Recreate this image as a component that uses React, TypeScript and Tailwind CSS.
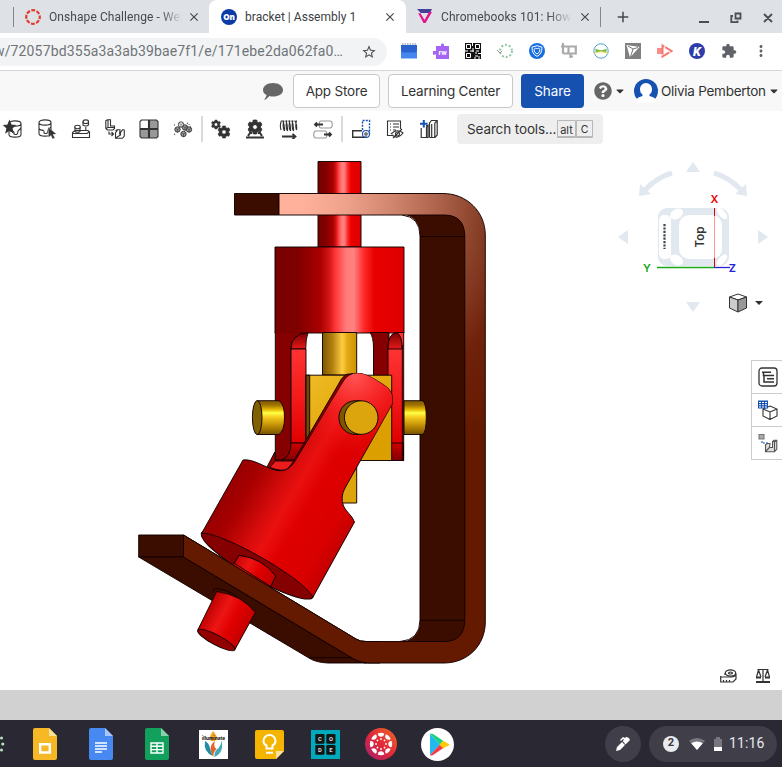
import type { ReactNode } from "react";
import { MdExtension, MdMoreVert, MdStarBorder, MdClose, MdAdd } from "react-icons/md";
import { FaQuestionCircle, FaCog, FaCaretDown } from "react-icons/fa";

const roboto = "font-[Roboto,sans-serif]";
const inter = "font-[Inter,sans-serif]";

function Slot({ children, w }: { children: ReactNode; w: string }) {
  return <div className={`flex h-full shrink-0 items-center justify-center ${w}`}>{children}</div>;
}

function TabStrip() {
  return (
    <div className={`flex h-[33px] bg-[#dee1e6] text-[12px] text-[#45494d] ${roboto}`}>
      <div className="flex w-[209px] items-center bg-[#dee1e6]">
        <div className="flex h-5 w-[14px] items-center overflow-hidden border-r border-[#84888c]">
          <MdClose className="-ml-[10px] size-[13px] shrink-0" />
        </div>
        <svg className="ml-[11px] size-4" viewBox="0 0 16 16">
          <circle cx="8" cy="8" r="6.8" fill="none" stroke="#e23b2e" strokeWidth="2.2" strokeDasharray="3.9 1.44" strokeDashoffset="1.9" />
        </svg>
        <div className="ml-2 w-[133px] overflow-hidden whitespace-nowrap tracking-[0.08px] [mask-image:linear-gradient(to_right,black_84%,transparent)]">Onshape Challenge - Web</div>
        <MdClose className="ml-[5px] size-[14px]" />
      </div>
      <div className="flex w-[197px] items-center rounded-t-lg bg-white">
        <svg className="ml-3 size-4" viewBox="0 0 16 16">
          <circle cx="8" cy="8" r="8" fill="#0b3ba5" />
          <text x="8" y="11" textAnchor="middle" fontFamily="Open Sans, sans-serif" fontWeight="800" fontSize="8" fill="#fff">On</text>
        </svg>
        <div className="ml-2 w-[138px] whitespace-nowrap tracking-[0.03px] text-[#3c4043]">bracket | Assembly 1</div>
        <MdClose className="size-[14px]" />
      </div>
      <div className="flex flex-1 items-center">
        <svg className="ml-[11px] size-[15px]" viewBox="0 0 15 15">
          <path d="M0 0H15L13 4H5.5L3.8 4.1Z" fill="#454095" />
          <path d="M3.5 4.2L7.5 11L12 3H15L8.5 14H6.5L1.2 4.2Z" fill="#e3138c" />
        </svg>
        <div className="ml-[9px] w-[131px] overflow-hidden whitespace-nowrap tracking-[0.1px] [mask-image:linear-gradient(to_right,black_82%,transparent)]">Chromebooks 101: How to</div>
        <MdClose className="ml-[6px] size-[14px]" />
        <div className="ml-[8px] h-5 w-px bg-[#84888c]" />
        <MdAdd className="ml-[13px] size-[18px]" />
        <svg className="ml-[67px] mt-[2px] h-3 w-[75px]" viewBox="0 0 75 12" fill="none" stroke="#4a4d51" strokeWidth="1.8">
          <path d="M0 10H10M36.5 1.5H41.5V6.5H36.5ZM34 4H32.3V10.2H38.5V8.4M65 2L73 10M73 2L65 10" />
        </svg>
      </div>
    </div>
  );
}

const extensions: ReactNode[] = [
  <svg viewBox="0 0 16 16" className="size-4"><path d="M0 2H16V15.5H0Z" fill="#4286ee" /><path d="M0 2H16V8L14 9.5H2L0 8Z" fill="#2a62cf" /><path d="M1 1H15" stroke="#b8bec6" strokeDasharray="1.5 1" strokeWidth="2" /></svg>,
  <svg viewBox="0 0 16 16" className="size-4"><path d="M4 3H8V1.5A1.7 1.7 0 0 1 11 1.5V3H16V16H3V11.5H2A2 2 0 0 1 0 8H3V3Z" fill="#a464f4" /><text x="9.7" y="12" textAnchor="middle" fontFamily="Roboto, sans-serif" fontWeight="700" fontSize="7.5" fill="#fff">rw</text></svg>,
  <svg viewBox="0 0 16 16" className="size-4"><path d="M0 0H16V16H0Z" fill="#111" /><path d="M1.5 1.5h4v4h-4zM10.5 1.5h4v4h-4zM1.5 10.5h4v4h-4zM7.5 0v3M8 5v4M0 8h3M5 8h4M11 8h3M10 10h2M13 10.5h3M10 13h3M9 15h2M14 13v3" fill="none" stroke="#fff" /></svg>,
  <svg viewBox="0 0 16 16" className="size-4"><circle cx="9" cy="8" r="6" fill="none" stroke="#8fc397" strokeWidth="2" strokeDasharray="1.8 2" /><path d="M0 7L3 10L5 8" fill="none" stroke="#999" /></svg>,
  <svg viewBox="0 0 16 16" className="size-4"><circle cx="8" cy="8" r="8" fill="#176ee0" /><path d="M8 2.7L13 4.2C13 9 11.5 11.7 8 13.4C4.5 11.7 3 9 3 4.2ZM8 5.8C4.2 3.6 4.1 9.1 8 11C11.9 9.1 11.8 3.6 8 5.8Z" fill="none" stroke="#fff" /></svg>,
  <svg viewBox="0 0 16 16" className="size-4" fill="none" stroke="#aaa" strokeWidth="2.2"><path d="M2 0V9.5Q2 10.5 3 10.5H7.5V3.5H14.8V10.5H9.5V15M0 3.5H7.5M9.5 13.5H12" /></svg>,
  <svg viewBox="0 0 16 16" className="size-4"><circle cx="8" cy="8" r="7.2" fill="#fff" stroke="#4f9fd0" /><path d="M2.5 5.5Q8 9 13.5 5.5V10Q8 7.5 2.5 10Z" fill="#77c043" /><path d="M1 10.5Q8 7 15 10.5" fill="none" stroke="#f1d65a" /></svg>,
  <svg viewBox="0 0 16 16" className="size-4"><path d="M0 0H16V16H0Z" fill="#808080" /><path d="M1.5 2L14.5 4L5 14.5Z" fill="#fff" /><path d="M3 3L8 6L5.5 14M8 6L13 4.5" fill="none" stroke="#555" strokeWidth=".8" /></svg>,
  <svg viewBox="0 0 16 16" className="size-4"><path d="M0 5H6V11H0Z" fill="#f98d8a" /><path d="M5.5 2.5V13.5L14.5 8Z" fill="#fff" stroke="#f87572" strokeWidth="2" strokeDasharray="9 1" /></svg>,
  <svg viewBox="0 0 16 16" className="size-4"><circle cx="8" cy="8" r="8" fill="#2d3caa" /><text x="8" y="12.5" textAnchor="middle" fontFamily="Roboto, sans-serif" fontStyle="italic" fontWeight="900" fontSize="12.5" fill="#fff">K</text></svg>,
  <MdExtension className="size-4 text-[#5f6368]" />,
  <MdMoreVert className="size-[18px] text-[#5f6368]" />,
];

function AddressBar() {
  return (
    <div className="flex h-[37px] items-center bg-white">
      <div className={`flex h-7 w-[387px] items-center justify-end rounded-r-full bg-[#f1f3f4] text-[14px] text-[#707478] ${roboto}`}>
        <span className="whitespace-nowrap tracking-[0.14px]">w/72057bd355a3a3ab39bae7f1/e/171ebe2da062fa0…</span>
        <MdStarBorder className="ml-[18px] mr-[10px] size-4 shrink-0 text-[#4c5054]" />
      </div>
      <div className="ml-[6px] flex h-full pb-px">
        {extensions.map((icon, i) => <Slot key={i} w="w-[32px]">{icon}</Slot>)}
      </div>
    </div>
  );
}

function DocumentHeader() {
  const button = "flex h-[34px] items-center justify-center rounded border border-[#c8c8c8] bg-white";
  return (
    <div className={`flex h-[41px] items-center border-t border-[#d4d6da] bg-[#f8f8f8] text-[13.5px] text-[#333] ${inter}`}>
      <svg className="ml-[263px] mr-[10px] h-[17px] w-5" viewBox="0 0 20 17"><path d="M10 0C15.5 0 20 2.8 20 7S15.5 13.5 10 13.5Q8 13.5 6.5 13Q4 16 1 17Q3.5 14 3.5 12Q0 10.4 0 7C0 2.8 4.5 0 10 0" fill="#666" /></svg>
      <div className={`w-[87px] tracking-[-0.2px] ${button}`}>App Store</div>
      <div className={`ml-2 w-[125px] tracking-[-0.24px] ${button}`}>Learning Center</div>
      <div className="ml-2 flex h-[34px] w-[63px] items-center justify-center rounded bg-[#1651b0] tracking-[-0.1px] text-white">Share</div>
      <FaQuestionCircle className="ml-[10px] size-[18px] text-[#666]" />
      <FaCaretDown className="ml-[2px] size-3" />
      <svg className="ml-[8px] size-6" viewBox="0 0 24 24">
        <circle cx="12" cy="12" r="12" fill="#1651b0" />
        <path d="M6 10A6 6 0 0 1 18 10Q18 14 15.5 15.5V17Q20 18 21.5 20V24H2.5V20Q4 18 8.5 17V15.5Q6 14 6 10" fill="#fff" />
      </svg>
      <span className="ml-[3px] w-[106px] whitespace-nowrap tracking-[-0.27px]">Olivia Pemberton</span>
      <FaCaretDown className="ml-[1px] size-3 shrink-0" />
    </div>
  );
}

function Line({ children }: { children: ReactNode }) {
  return <svg viewBox="0 0 20 20" className="size-5" fill="none" stroke="#333" strokeWidth="1.1">{children}</svg>;
}

const cyl = <path d="M4 4.5V15.5C4 19 16 19 16 15.5V4.5C16 1 4 1 4 4.5C4 8 16 8 16 4.5M4 10C4 14 10 10 9 15Q13 17 13 12L16 9" />;

function FeatureToolbar() {
  return (
    <div className="flex h-9 items-center bg-white">
      <div className="-ml-1 flex h-full">
        <Slot w="w-[34px]"><Line><g transform="translate(2 0)">{cyl}</g><path d="M6.5 2L8.2 6L12 6.5L9 9.2L10 13.5L6.5 11L3 13.5L4 9.2L1 6.5L4.8 6Z" fill="#333" /></Line></Slot>
        <Slot w="w-[34px]"><Line><g transform="translate(-2 -1)">{cyl}</g><path d="M11 8L19.5 15L16 15.5L18 19L15.5 20L14 16.5L11.5 18.5Z" fill="#333" stroke="#fff" strokeWidth=".4" /></Line></Slot>
        <Slot w="w-[34px]"><Line><path d="M1.5 13.5L4 11.5H17L18.5 13V18.5H1.5ZM1.5 14.5H16L18.5 12.5M4 8V12.5Q6.5 14 9 12.5V8M12 2.5V6Q14.5 8 17.5 6V2.5M14.8 8V12" /><ellipse cx="6.5" cy="8" rx="2.7" ry="1.8" fill="#fff" /><ellipse cx="14.8" cy="2.7" rx="2.7" ry="1.8" fill="#fff" /></Line></Slot>
        <Slot w="w-[34px]"><Line><path d="M.8 1.8L2.5.8H5.5V7H9.5V9.5L8 11H2.5L.8 9.5ZM3 1V8.5L.8 9.5M3 8.5H9M10.5 12L12 10.8M19.3 10.8V17L17.5 19.3H10.5V14L12.5 10.8H15L14.5 15.5M19.3 10.8H17.5L15.5 13.5V16L10.5 19M4 12.5V15H8M6.5 13L8.5 15L6.5 17" /></Line></Slot>
        <Slot w="w-[34px]"><Line><path d="M1 2.5L2.5 1H9.5V9.5H1Z" fill="#fff" /><path d="M10.5 1H17.5L19 2.5V9.5H10.5ZM1 10.5H9.5V19H2.5L1 17.5ZM10.5 10.5H19V17.5L17.5 19H10.5Z" fill="#999" /></Line></Slot>
        <Slot w="w-[34px]"><Line>
          {[[8, 5.5], [4.5, 10.5], [12, 8.5], [10.5, 15], [16, 10.5]].map(([x, y], i) => <g key={i}><circle cx={x} cy={y} r="2.7" fill={i ? "#999" : "#fff"} strokeWidth=".9" /><path d={`M${x - 2} ${y - 1}L${x} ${y}L${x + 2} ${y - 1}M${x} ${y}V${y + 3}`} strokeWidth=".6" /></g>)}
          <path d="M1 6H3M14 4L17 6M1 15L3 16M17 8H19" strokeDasharray="1 1" />
        </Line></Slot>
      </div>
      <div className="mx-px h-[26px] w-[2px] bg-[#dadada]" />
      <div className="flex h-full">
        <Slot w="w-[34px]"><Line><FaCog x="0" y="0.5" size={10} color="#333" stroke="#333" strokeWidth="10" /><FaCog x="6.5" y="6.5" size={13} color="#333" stroke="#333" strokeWidth="20" /></Line></Slot>
        <Slot w="w-[34px]"><Line><FaCog x="2.5" y="0.5" size={15} color="#333" stroke="#333" strokeWidth="30" /><path d="M1 18.5H19M3 17L5 14H7M17 17L15 14H13" strokeWidth="2" /></Line></Slot>
        <Slot w="w-[34px]"><Line><path d="M2.5 1.5Q.5 6 2 11M5 1.5Q3 8 5.5 12M8 1.5Q6 8 8.5 12M11 1.5Q9 8 11.5 12M14 1.5Q12 8 14.5 12M17.5 1.5Q16 8 17.5 11M3.5 1.5Q6 6 5.5 12M6.7 1.5Q9 6 8.5 12M9.7 1.5Q12 6 11.5 12M12.7 1.5Q15 6 14.5 12M15.7 1.5Q18.5 6 17.5 11" strokeWidth="1.1" /><path d="M3 17.5H16M13.5 14.8L16.5 17.5L13.5 20.2" strokeWidth="1.8" /></Line></Slot>
        <Slot w="w-[34px]"><Line><path d="M8 2H17C20 2 20 9 17 9H8C5.5 9 5.5 2 8 2ZM2 12H12C14.5 12 14.5 19 12 19H3C0 19 0 12 3 12" stroke="#999" /><path d="M10 5.5H2M4 3.5L2 5.5L4 7.5M11 15.5H18M16 13.5L18 15.5L16 17.5" strokeWidth="1.8" /></Line></Slot>
      </div>
      <div className="mx-px h-[26px] w-[2px] bg-[#dadada]" />
      <div className="flex h-full">
        <Slot w="w-[34px]"><Line><path d="M11 11.7H1.7V18.3H16" strokeWidth="1.4" /><path d="M11.5 11V1.5H18.5V15" stroke="#1651b0" strokeWidth="1.4" strokeDasharray="2 1.2" /><circle cx="15" cy="15" r="3.5" stroke="#1651b0" /><circle cx="15" cy="15" r="1.2" /></Line></Slot>
        <Slot w="w-[34px]"><Line><path d="M8 16.5H2.5V2H15.5V10M5 5H6M8 5H14M5 8H6M8 8H14M5 11H6M8 11H11M6 15Q12 9 18 14Q13 21 7 16M17 10L8 19" /><circle cx="12.5" cy="15" r="2" /></Line></Slot>
        <Slot w="w-[34px]"><Line><path d="M2.2 9V18.5H9V6.5L7.5 8V18M9 6.5H7M10.5 18.5V4L12.5 1.5H18.2V16L16 18.5H10.5M15.8 4V18M15.8 4L18 2M12.7 5V18" strokeWidth="1.2" /><path d="M4.8 1V8.5M1 4.7H8.6" stroke="#1651b0" strokeWidth="2" /></Line></Slot>
      </div>
      <div className={`ml-[11px] flex h-[30px] w-[146px] items-center rounded bg-[#eee] pl-[10px] text-[13.5px] text-[#333] ${inter}`}>
        <span className="w-[90px] whitespace-nowrap tracking-[-0.12px]">Search tools...</span>
        <span className="flex h-[18px] w-[19px] items-center justify-center rounded-[1px] border border-b-2 border-[#b8b8b8] pt-[3px] text-[11px]">alt</span>
        <span className="flex h-[18px] w-[17px] items-center justify-center rounded-[1px] border border-b-2 border-[#b8b8b8] pt-[3px] text-[10.5px]">C</span>
      </div>
    </div>
  );
}

type Stop = [number, string];
function Grad({ id, x1, y1, x2, y2, stops }: { id: string; x1: number; y1: number; x2: number; y2: number; stops: Stop[] }) {
  return (
    <linearGradient id={id} gradientUnits="userSpaceOnUse" x1={x1} y1={y1} x2={x2} y2={y2}>
      {stops.map(([o, c]) => <stop key={o} offset={o} stopColor={c} />)}
    </linearGradient>
  );
}

const forkOutline = "M243 460C253 458.5 264 467 275 470C286 473 292 467 298 456L342 384Q348 371.5 361 373.5Q368 374.5 384 385Q394.5 391 392.3 404L345 488Q340 497 343.5 506C346 512 352 515 354.5 522L313 597C300 575 217 530 201.5 533.5Z";

function Model() {
  const steel: Stop[] = [[0, "#780000"], [0.18, "#800000"], [0.35, "#aa0000"], [0.42, "#d31515"], [0.47, "#ff3838"], [0.55, "#ff7a7a"], [0.61, "#ff8282"], [0.69, "#ff2a2a"], [0.77, "#e80000"], [1, "#df0000"]];
  const brass: Stop[] = [[0, "#7a5600"], [0.15, "#a27500"], [0.27, "#e6b800"], [0.37, "#ffff45"], [0.5, "#f4c81c"], [0.8, "#ae7c00"], [1, "#6f4c00"]];
  return (
    <g stroke="#140000" strokeWidth="0.95" strokeLinejoin="round">
      <defs>
        <radialGradient id="frame" gradientUnits="userSpaceOnUse" cx="280" cy="200" r="300">
          <stop offset="0.08" stopColor="#ffb19b" /><stop offset="0.22" stopColor="#efa28b" /><stop offset="0.38" stopColor="#cf846d" />
          <stop offset="0.55" stopColor="#a85e46" /><stop offset="0.66" stopColor="#89412a" /><stop offset="0.8" stopColor="#70220c" /><stop offset="1" stopColor="#641a00" />
        </radialGradient>
        <Grad id="shaft" x1={318} y1={0} x2={361} y2={0} stops={steel} />
        <Grad id="yoke" x1={275} y1={0} x2={404} y2={0} stops={steel} />
        <Grad id="rod" x1={322} y1={0} x2={357} y2={0} stops={[[0, "#7a5600"], [0.3, "#b38110"], [0.58, "#ffcd42"], [0.72, "#e4aa12"], [1, "#c99200"]]} />
        <Grad id="pin" x1={0} y1={400} x2={0} y2={435} stops={brass} />
        <Grad id="block" x1={310} y1={375} x2={370} y2={440} stops={[[0, "#efba25"], [1, "#dba000"]]} />
        <Grad id="side" x1={0} y1={349} x2={0} y2={443} stops={[[0, "#ff3333"], [0.5, "#f31b1b"], [1, "#e00000"]]} />
        <Grad id="bend" x1={0} y1={333} x2={0} y2={349} stops={[[0, "#800000"], [1, "#e51919"]]} />
        <Grad id="foot" x1={0} y1={443} x2={0} y2={460} stops={[[0, "#d00000"], [1, "#850000"]]} />
        <Grad id="fork" x1={222} y1={496} x2={336} y2={562} stops={[[0, "#980000"], [0.15, "#a80000"], [0.37, "#d90c0c"], [0.46, "#ea1010"], [0.6, "#df0000"], [0.85, "#d90000"], [1, "#c00000"]]} />
        <radialGradient id="shine" gradientUnits="userSpaceOnUse" cx="355" cy="376" r="80"><stop stopColor="#ff5353" /><stop offset=".4" stopColor="#f92828" stopOpacity=".85" /><stop offset="1" stopColor="#ee1010" stopOpacity="0" /></radialGradient>
        <Grad id="stub" x1={205} y1={612} x2={247} y2={634} stops={[[0, "#bd0000"], [0.35, "#ed1515"], [0.6, "#e00000"], [1, "#c00000"]]} />
      </defs>

      <path d="M402 214Q420 217 420 236V620Q420 640 400 642H470V214Z" fill="#3b0d00" stroke="none" />
      <path d="M402 215Q420 217 420 236V620Q420 640 400 641.5M420 236.5H465M420 620.3H465" fill="none" />
      <path d="M318 161.5H361V247H318Z" fill="url(#shaft)" />
      <path d="M234.5 193.5H279V215H234.5Z" fill="#3b0d00" />
      <path d="M279 193.5H443C467 193.5 485.3 212 485.3 235V622C485.3 645 468 663 444 663H366Q360 663 352 658L183.5 557V535L356 639Q360 641.5 366 641.5H444Q464.5 641.5 464.8 620V236Q464.5 215 444 215H279Z" fill="url(#frame)" />

      <path d="M275 247H404V333H275Z" fill="url(#yoke)" />
      <path d="M370 332.5H389V376H373.5V348Q373.5 337 370 332.5Z" fill="#850000" />
      <path d="M275.3 332V460.5H281Q291 457 291 443V349Q291 334 308 332.5" fill="#850000" />
      <path d="M291 349Q291 334 308 332.5Q305.7 339 305.7 349Z" fill="url(#bend)" />
      <path d="M291 349H306V443H291Z" fill="url(#side)" />
      <path d="M291 443H306V460.5H281Q291 457 291 443Z" fill="url(#foot)" />
      <path d="M388 349Q388 335 396 332.5H403.7V460.5H388Z" fill="url(#side)" />
      <path d="M388 349Q388 334 396 332.5Q402 334 402.3 349Z" fill="url(#bend)" />
      <path d="M388 443H403.5V460.5H388Z" fill="url(#foot)" />
      <path d="M402.3 345V460" />
      <path d="M322.5 332.5H356.7V375H322.5Z" fill="url(#rod)" />
      <path d="M341 460H356.7V503H341Z" fill="#dda40c" />
      <path d="M306 375.2H391.7V460.5H306Z" fill="url(#block)" />
      <path d="M306 375.2H309.7V460H306Z" fill="#6d4b00" />
      <path d="M257 400.7H279Q284.5 404 284.5 417.5T279 434.5H257Z" fill="url(#pin)" />
      <ellipse cx="257.2" cy="417.6" rx="4.8" ry="17" fill="#806000" />
      <path d="M404 400.7H423Q426.3 404 426.3 417.5T423 434.5H404Z" fill="url(#pin)" />

      <path d="M274.8 452L267 467L275 471L289 468L298 460H275Z" fill="#9a0000" />
      <path d="M275 461H300L291 469Q281 472 270 467.5Z" fill="#ed1c1c" />
      <path d="M346 374.5Q341 378 338 385L296 457Q293 463 287 469.5L293 467L298 457L342 384Q345 376 353 373.5Z" fill="#8b0000" />
      <ellipse cx="257.3" cy="565" rx="64.3" ry="13" transform="rotate(30 257.3 565)" fill="#850000" />
      <path d="M239 555.3Q262 558 275.8 576L269 588L232 566Z" fill="url(#fork)" />
      <path d={forkOutline} fill="url(#fork)" />
      <path d={forkOutline} fill="url(#shine)" stroke="none" />
      <path d="M239 555.3Q262 558 275.8 576L270.7 586.5L234.3 563.3Z" fill="url(#stub)" />
      <path d="M361 400.7H355.5A16.5 16.8 0 0 0 355.5 434.5H361Z" fill="#7a5700" />
      <circle cx="361.2" cy="417.6" r="16.8" fill="#dca40d" />

      <path d="M138.7 535H183.5V557H138.7Z" fill="#3b0d00" />
      <path d="M138.7 557H183.5L352 658Q360 663 366 663H328Q316 662.5 309 658Z" fill="#3b0d00" />
      <path d="M183.5 535V557L352 658Q360 663 368 663H380V641.5H366Q360 641.5 356 639Z" fill="#641a00" stroke="none" />
      <path d="M309 657.7H352M183.5 535V557L352 658Q360 663 368 663H380M380 641.5H366Q360 641.5 356 639L183.5 535" fill="none" />
      <path d="M213.5 591.5Q213 588 217 588.5Q231 590 243 602" fill="none" />
      <path d="M216.7 591.5Q242 595 255.3 612.5L234.8 649.7L197.8 630Z" fill="url(#stub)" />
      <ellipse cx="216.3" cy="640" rx="21" ry="5" transform="rotate(28 216.3 640)" fill="#940000" />
    </g>
  );
}

function ViewCube() {
  return (
    <g fill="#e1e8ef">
      <path d="M693 162L686 172H700ZM693 312L686 302H700ZM618 237L628 230V244ZM768 237L758 230V244Z" />
      <path d="M672 173Q657 177 644 191M714 173Q729 177 742 191" fill="none" stroke="#e1e8ef" strokeWidth="5" />
      <path d="M640 184L639 196L651 194ZM746 184L747 196L735 194Z" />
      <rect x="658" y="208" width="71" height="58" rx="9" />
      <g fill="#fff">
        <rect x="659" y="215" width="12" height="44" rx="5" />
        <rect x="679" y="215" width="43" height="44" rx="10" />
        <ellipse cx="676.5" cy="214" rx="7" ry="4.8" transform="rotate(-30 676.5 214)" />
        <ellipse cx="676.5" cy="260" rx="7" ry="4.8" transform="rotate(30 676.5 260)" />
        <ellipse cx="722" cy="213.5" rx="7" ry="3.3" transform="rotate(50 722 213.5)" />
        <ellipse cx="722" cy="260" rx="7" ry="3.3" transform="rotate(-50 722 260)" />
      </g>
      <path d="M714.5 215V258" stroke="#ff9696" />
      <path d="M714.5 208V216M714.5 258V267" stroke="#d00" />
      <path d="M657 267.5H714" stroke="#18a818" strokeWidth="1.3" />
      <path d="M714 267.5H730" stroke="#2222d8" strokeWidth="1.3" />
      <g fontFamily="Inter, sans-serif" fontWeight="600" fontSize="11" textAnchor="middle">
        <text x="714.5" y="202.5" fill="#e00000">X</text>
        <text x="647" y="271.5" fill="#18a818">Y</text>
        <text x="732.3" y="271.5" fill="#2222d8">Z</text>
        <text transform="translate(704 237) rotate(-90)" fill="#333" fontSize="11.5">Top</text>
      </g>
      <path d="M664.5 224V249" stroke="#444" strokeWidth="2.2" strokeDasharray="2.2 1.2" />
      <g stroke="#333" strokeWidth="1" strokeLinejoin="round">
        <path d="M729.5 297L738 294L746.5 297L738 300Z" fill="#fff" />
        <path d="M729.5 297L738 300V312L729.5 308Z" fill="#ccc" />
        <path d="M746.5 297L738 300V312L746.5 308Z" fill="#999" />
      </g>
      <path d="M755 301H763L759 305Z" fill="#333" />
    </g>
  );
}

function SidePanels() {
  const cell = "flex h-[33px] items-center justify-center border-b border-l border-[#ccc] bg-white pl-[2px]";
  return (
    <div className="absolute right-0 top-[213px] w-[31px] border-t border-[#ccc]">
      <div className={cell}><Line><rect x="1" y="1" width="18" height="18" rx="3" strokeWidth="1.3" /><path d="M4 5.3H13M7 8.5H16M9 11.7H16M9 15H16M5.5 5V8.5H8M6 8V15H9" strokeWidth="1.5" /></Line></div>
      <div className={cell}><Line><path d="M5 9L12 6L19 9V16L12 19.5L5 16ZM5 9L12 12L19 9M12 12V19" fill="#fff" /><path d="M0 .5H10V8.5H0Z" fill="#1651b0" stroke="none" /><path d="M1 2.5H9M1 4.8H9M1 7H9" stroke="#fff" strokeDasharray="2 1" /></Line></div>
      <div className={cell}><Line><path d="M1 1.5H6V6H1Z" fill="#aaa" stroke="#777" /><path d="M4 8V10H10" stroke="#1651b0" strokeDasharray="2 1" /><path d="M7.5 12L9 10.5H12L11.5 14.5H14.5V8.5L16 7.3H18.8V16L16.5 18.8H7.5ZM14.5 8.5H17M16.5 18.8V9L18.5 7.5M7.5 18.5L11.5 14.5" fill="#ddd" stroke="#555" /></Line></div>
    </div>
  );
}

function GraphicsArea() {
  return (
    <div className="relative h-[543px] bg-white">
      <svg className="block h-[543px] w-[782px]" viewBox="0 147 782 543"><Model /><ViewCube /></svg>
      <SidePanels />
      <div className="absolute bottom-[6px] right-[11px] flex items-center gap-[18px]">
        <svg viewBox="0 0 17 14" className="h-[14px] w-[17px]" fill="none" stroke="#333" strokeWidth="1.2"><path d="M.7 7V13H13L16 10V4.5M.7 8H12Q16 7 16 4.5M3.5 11V13M6.5 11V13M9.5 11V13M5 6V4" /><ellipse cx="10.5" cy="4" rx="5.2" ry="3.1" /><ellipse cx="10.5" cy="4" rx="2" ry="1" /></svg>
        <svg viewBox="0 0 16 16" className="size-4" fill="none" stroke="#333" strokeWidth="1.2"><path d="M2.5 1.5H13.5M8 1V13M3.5 2L1.5 9M3.5 2L6 9M12.5 2L10 9M12.5 2L14.5 9" /><path d="M1 9.5H6M10 9.5H15M1 14H15" strokeWidth="2.2" /></svg>
      </div>
    </div>
  );
}

function DocIcon({ body, fold, children }: { body: string; fold: string; children: ReactNode }) {
  return <svg className="h-8 w-6" viewBox="0 0 24 32"><path d="M2 0H16L24 8V30Q24 32 22 32H2Q0 32 0 30V2Q0 0 2 0" fill={body} /><path d="M16 0L24 8H16Z" fill={fold} />{children}</svg>;
}

function Shelf() {
  return (
    <div className={`flex h-[47px] items-center bg-[#2a2833] ${roboto}`}>
      <svg className="h-4 w-[17px]" viewBox="0 0 17 16" fill="#b8e4bd"><circle cx="1.5" cy="2" r="1.5" /><circle cx="2.8" cy="8" r="1.6" /><circle cx="1.5" cy="14" r="1.5" /></svg>
      <div className="flex h-full pt-px">
        <Slot w="w-[56px]"><DocIcon body="#f6b824" fold="#fbe09a"><path d="M7.2 16.2H16.8V24.5H7.2Z" fill="none" stroke="#fff" strokeWidth="2.4" /></DocIcon></Slot>
        <Slot w="w-[56px]"><DocIcon body="#4788f1" fold="#a8c6fa"><path d="M6 15H18M6 18H18M6 21H18M6 24H13" stroke="#fff" strokeWidth="1.3" /></DocIcon></Slot>
        <Slot w="w-[56px]"><DocIcon body="#12a05d" fold="#8bd0ae"><path d="M6 15H18V25H6ZM6 18.3H18M6 21.6H18M12 15V25" fill="none" stroke="#fff" strokeWidth="1.4" /></DocIcon></Slot>
        <Slot w="w-[56px]">
          <svg className="size-[29px]" viewBox="0 0 29 29"><path d="M0 0H29V29H0Z" fill="#fff" /><path d="M14 1Q19 6 17.5 10Q12 13 10.5 9Q11 5 14 1" fill="#f5a623" /><path d="M6 11Q10 13 11 18Q11.500 22 14 26Q4 22 6 11" fill="#238ba2" /><path d="M14.5 27Q8 17 16 11Q14 17 17.500 19Q14 22 14.500 27" fill="#e0662e" /><path d="M22.500 11Q25.500 22 15.500 27Q15 21 19.500 18Q22 15.500 22.500 11" fill="#42a9b8" /><text x="14.5" y="9.500" textAnchor="middle" fontFamily="Inter, sans-serif" fontWeight="800" fontSize="4.7" textLength="23" lengthAdjust="spacingAndGlyphs" fill="#222">illuminate</text></svg>
        </Slot>
        <Slot w="w-[57px]">
          <svg className="size-[29px]" viewBox="0 0 29 29"><path d="M2 0H27Q29 0 29 2V21L21 29H2Q0 29 0 27V2Q0 0 2 0" fill="#f5b400" /><path d="M29 21L21 29V21Z" fill="#fbe39b" /><path d="M11.500 18.500H17.500V15.500Q20.500 14 20.500 11A6 6 0 0 0 8.500 11Q8.500 14 11.500 15.500ZM11 22.700H18" fill="none" stroke="#fff" strokeWidth="2" /></svg>
        </Slot>
        <Slot w="w-[55px]">
          <svg className="size-[29px]" viewBox="0 0 29 29"><path d="M0 0H29V29H0Z" fill="#00a9bc" />
            {["C", "O", "D", "E"].map((c, i) => <g key={c}><rect x={4.3 + (i % 2) * 11} y={4 + (i >> 1) * 11} width="9.2" height="9.8" rx="1.3" fill="#151515" /><text x={9 + (i % 2) * 11} y={11 + (i >> 1) * 11} textAnchor="middle" fontFamily="Roboto, sans-serif" fontSize="5.8" fontWeight="700" fill="#ddd">{c}</text></g>)}
          </svg>
        </Slot>
        <Slot w="w-[56px]">
          <svg className="size-8" viewBox="0 0 32 32"><defs><linearGradient id="lms" x1="0" y1="1" x2="1" y2="0"><stop stopColor="#a01f73" /><stop offset=".5" stopColor="#e22938" /><stop offset="1" stopColor="#ee6b25" /></linearGradient></defs><circle cx="16" cy="16" r="16" fill="url(#lms)" />
            {[0, 45, 90, 135, 180, 225, 270, 315].map((a) => <g key={a} transform={`rotate(${a} 16 16)`} fill="#fff"><path d="M12.700 5.500Q16 4 19.300 5.500Q18.800 8.700 16 8.700T12.700 5.500" /><circle cx="16" cy="11" r=".9" /></g>)}
          </svg>
        </Slot>
        <Slot w="w-[56px]">
          <svg className="size-[33px]" viewBox="0 0 33 33"><circle cx="16.5" cy="16.5" r="16.5" fill="#fff" /><path d="M9 6V27L19 16.500Z" fill="#22b9ee" /><path d="M9 6Q10 5 12 6L22.500 13L19 16.500Z" fill="#19d184" /><path d="M9 27Q10 28 12 27L22.500 20L19 16.500Z" fill="#f33a4a" /><path d="M22 12.700L28 16Q29 16.700 28 17.300L22 20.500L18.500 16.500Z" fill="#ffc90b" /></svg>
        </Slot>
      </div>
      <div className="ml-auto mr-2 flex size-9 items-center justify-center rounded-full bg-[#403e49]">
        <svg className="size-[14px]" viewBox="0 0 14 14"><path d="M0 14L1 10L6 5L9 8L4 13ZM6.7 4L8 2.7L7 2L5 4L4 3L7 0L9 1L10 0Q13 0 14 3L9.5 7.5Z" fill="#fff" /></svg>
      </div>
      <div className="mr-[5px] flex h-9 w-32 items-center rounded-full bg-[#403e49] pl-[14px] text-[#e8eaed]">
        <span className="flex size-4 items-center justify-center rounded-full bg-[#e8eaed] text-[11px] font-bold text-[#37353f]">2</span>
        <svg className="ml-[10px] h-3 w-4" viewBox="0 0 16 12"><path d="M0 2.800Q8-2.800 16 2.800L8 12Z" fill="#77757f" /><path d="M2.200 5.300Q8 1.800 13.800 5.300L8 12Z" fill="#fff" /></svg>
        <svg className="ml-[9px] h-[14px] w-2" viewBox="0 0 8 14"><path d="M0 2H2V0H6V2H8V14H0Z" fill="#77757f" /><path d="M0 10H8V14H0Z" fill="#fff" /></svg>
        <span className="ml-[7px] text-[14px] tracking-[0.1px]">11:16</span>
      </div>
    </div>
  );
}

export default function App() {
  return (
    <div className="h-[767px] w-[782px] overflow-hidden bg-white">
      <TabStrip />
      <AddressBar />
      <DocumentHeader />
      <FeatureToolbar />
      <GraphicsArea />
      <div className="h-[30px] bg-[#d1d1d1]" />
      <Shelf />
    </div>
  );
}
